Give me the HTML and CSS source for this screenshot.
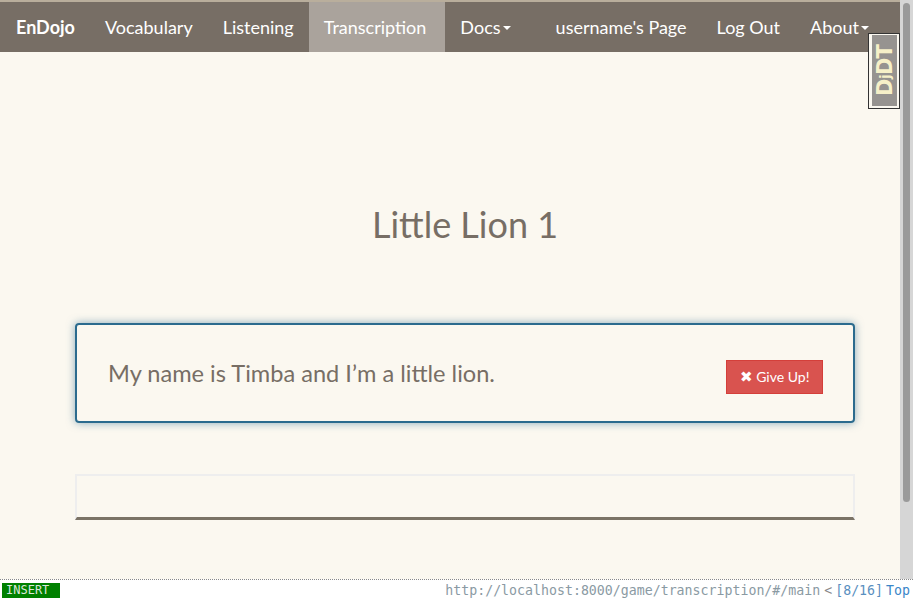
FILE: index.html
```html
<!DOCTYPE html>
<html>
<head>
<meta charset="utf-8">
<title>EnDojo</title>
<link rel="stylesheet" href="styles.css">
</head>
<body>
<div class="window">
  <div class="viewport">
    <div class="page">
      <div class="topstrip"></div>
      <nav class="navbar">
        <a class="brand">EnDojo</a>
        <a class="nav-item">Vocabulary</a>
        <a class="nav-item">Listening</a>
        <a class="nav-item active">Transcription</a>
        <a class="nav-item">Docs<span class="caret"></span></a>
        <span class="spacer"></span>
        <a class="nav-item">username's Page</a>
        <a class="nav-item">Log Out</a>
        <a class="nav-item">About<span class="caret"></span></a>
      </nav>
      <main class="content">
        <h1 class="title">Little Lion 1</h1>
        <div class="sentence-card">
          <p class="sentence">My name is Timba and I’m a little lion.</p>
          <button class="btn-giveup"><span class="x">✖</span> Give Up!</button>
        </div>
        <div class="answer-box"></div>
      </main>
      <div class="djdt"><span class="djdt-text">D<span class="jj">j</span>DT</span></div>
    </div>
    <div class="scrollbar"><div class="thumb"></div></div>
  </div>
  <div class="statusbar">
    <span class="mode">INSERT</span>
    <span class="status-right"><span class="url">http://localhost:8000/game/transcription/#/main</span><span class="lt">&lt;</span><span class="pos">[8/16]</span><span class="top">Top</span></span>
  </div>
</div>
</body>
</html>
```
FILE: styles.css
```css
* { box-sizing: border-box; }
html, body { margin: 0; padding: 0; overflow: hidden; }
body { font-family: Lato, "Open Sans", sans-serif; }

.window { width: 913px; height: 600px; display: flex; flex-direction: column; }
.viewport { flex: 1; display: flex; min-height: 0; }
.page { flex: 1; background: #fbf8f0; position: relative; }

.topstrip { height: 2px; background: #b9ae9c; }

.navbar {
  height: 50px;
  background: #776e65;
  display: flex;
  align-items: stretch;
  padding-left: 1px;
  padding-right: 16px;
}
.navbar a {
  display: flex;
  align-items: center;
  padding: 0 15px;
  color: #fff;
  font-size: 18px;
  text-decoration: none;
  white-space: nowrap;
}
.navbar .brand { font-weight: 700; }
.navbar .active { background: #aaa39c; padding-right: 19px; }
.spacer { flex: 1; }
.caret {
  display: inline-block;
  width: 0; height: 0;
  margin-left: 2px;
  margin-top: 2px;
  border-top: 4px solid #fff;
  border-left: 4px solid transparent;
  border-right: 4px solid transparent;
}

.content { padding: 0 45px 0 75px; }
.title {
  margin: 150px 0 0;
  text-align: center;
  font-size: 36px;
  font-weight: 400;
  color: #776e65;
  line-height: 44px;
}

.sentence-card {
  margin-top: 77px;
  height: 100px;
  border: 2px solid #2b6b8e;
  border-radius: 4px;
  box-shadow: 0 0 8px rgba(43, 107, 142, 0.55);
  display: flex;
  align-items: center;
  justify-content: space-between;
  padding: 0 30px 0 31px;
}
.sentence { margin: 0; font-size: 23.6px; color: #776e65; }
.btn-giveup {
  font-family: Lato, sans-serif;
  font-size: 14px;
  color: #fff;
  background: #d9534f;
  border: 1px solid #d43f3a;
  height: 34px;
  width: 97px;
  padding: 0;
  border-radius: 0;
  margin-top: 7px;
}
.btn-giveup .x { font-size: 15px; }

.answer-box {
  margin-top: 51px;
  height: 46px;
  border: 2px solid #eeeeee;
  border-bottom: 3px solid #7b7366;
}

.djdt {
  position: absolute;
  right: 0;
  top: 33px;
  width: 32px;
  height: 76px;
  border: 1px solid #333;
  background: #fbf8f0;
  padding: 1px 2px 2px 3px;
}
.djdt-text {
  display: flex;
  align-items: center;
  justify-content: center;
  width: 100%;
  height: 100%;
  background: #969390;
  color: #f6f0c8;
  font-family: "DejaVu Sans", sans-serif;
  font-weight: 700;
  font-size: 21px;
  writing-mode: vertical-rl;
  transform: rotate(180deg);
  letter-spacing: -1px;
}
.djdt-text .jj { font-size: 14px; }

.scrollbar { width: 13px; background: #d6d6d6; position: relative; }
.thumb {
  position: absolute;
  left: 3px; top: 3px;
  width: 7px; height: 499px;
  background: #9a9a9a;
  border-radius: 4px;
}

.statusbar {
  height: 21px;
  border-top: 1px dotted #888;
  background: #fff;
  display: flex;
  align-items: center;
  justify-content: space-between;
  padding: 0 3px 0 2px;
  font-family: "DejaVu Sans Mono", monospace;
  font-size: 12px;
}
.mode {
  background: #008000;
  color: #dce8dc;
  padding: 0 4px;
  height: 15px;
  line-height: 15px;
  width: 58px;
  font-family: "DejaVu Sans Mono", monospace;
  font-size: 12px;
}
.status-right { font-size: 13.25px; }
.url { color: #8a9aa3; }
.lt { color: #888; margin: 0 3px 0 4px; }
.pos { color: #5a8fc0; }
.top { color: #3a86c8; margin-left: 3px; }
```
